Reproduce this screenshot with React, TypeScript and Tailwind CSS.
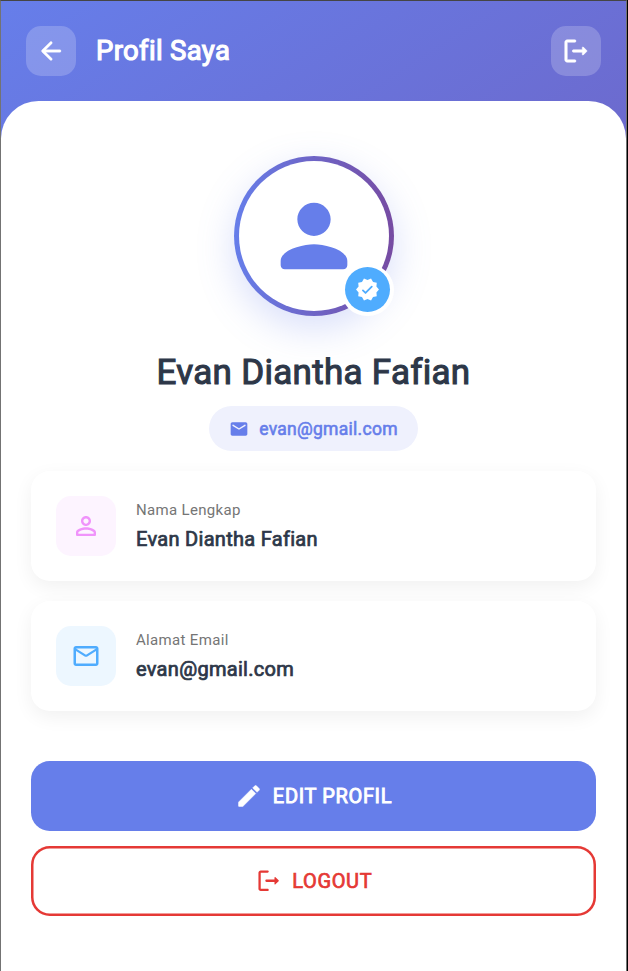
import type { ReactNode } from "react";

type IconProps = { className: string; children: ReactNode };

function Icon({ className, children }: IconProps) {
  return (
    <svg viewBox="0 0 24 24" fill="currentColor" className={"block shrink-0 " + className}>
      {children}
    </svg>
  );
}

function ArrowBackIcon({ className }: { className: string }) {
  return (
    <Icon className={className}>
      <path d="M19 11H7.83l4.88-4.88c.39-.39.39-1.03 0-1.42-.39-.39-1.02-.39-1.41 0l-6.59 6.59c-.39.39-.39 1.02 0 1.41l6.59 6.59c.39.39 1.02.39 1.41 0 .39-.39.39-1.02 0-1.41L7.83 13H19c.55 0 1-.45 1-1s-.45-1-1-1z" />
    </Icon>
  );
}

function LogoutIcon({ className }: { className: string }) {
  return (
    <Icon className={className}>
      <path d="M5 5h6c.55 0 1-.45 1-1s-.45-1-1-1H5c-1.1 0-2 .9-2 2v14c0 1.1.9 2 2 2h6c.55 0 1-.45 1-1s-.45-1-1-1H5V5z" />
      <path d="M20.65 11.65l-2.79-2.79c-.32-.32-.86-.1-.86.35V11h-7c-.55 0-1 .45-1 1s.45 1 1 1h7v1.79c0 .45.54.67.85.35l2.79-2.79c.2-.19.2-.51.01-.7z" />
    </Icon>
  );
}

function PersonIcon({ className }: { className: string }) {
  return (
    <Icon className={className}>
      <path d="M12 12c2.21 0 4-1.79 4-4s-1.79-4-4-4-4 1.79-4 4 1.79 4 4 4zm0 2c-2.67 0-8 1.34-8 4v1c0 .55.45 1 1 1h14c.55 0 1-.45 1-1v-1c0-2.66-5.33-4-8-4z" />
    </Icon>
  );
}

function VerifiedIcon({ className }: { className: string }) {
  return (
    <Icon className={className}>
      <path d="M23 12l-2.44-2.79.34-3.69-3.61-.82-1.89-3.2L12 2.96 8.6 1.5 6.71 4.69 3.1 5.5l.34 3.7L1 12l2.44 2.79-.34 3.7 3.61.82L8.6 22.5l3.4-1.47 3.4 1.46 1.89-3.19 3.61-.82-.34-3.69L23 12z" />
      <path d="M7.6 12.8l2.5 2.5 6-6.1" fill="none" stroke="#4facfe" strokeWidth="1.7" strokeLinecap="round" strokeLinejoin="round" />
    </Icon>
  );
}

function MailFilledIcon({ className }: { className: string }) {
  return (
    <Icon className={className}>
      <path d="M20 4H4c-1.1 0-1.99.9-1.99 2L2 18c0 1.1.9 2 2 2h16c1.1 0 2-.9 2-2V6c0-1.1-.9-2-2-2zm-.4 4.25l-7.07 4.42c-.32.2-.74.2-1.06 0L4.4 8.25c-.25-.16-.4-.43-.4-.72 0-.67.73-1.07 1.3-.72L12 11l6.7-4.19c.57-.35 1.3.05 1.3.72 0 .29-.15.56-.4.72z" />
    </Icon>
  );
}

function PersonOutlineIcon({ className }: { className: string }) {
  return (
    <Icon className={className}>
      <path d="M12 5.9c1.16 0 2.1.94 2.1 2.1s-.94 2.1-2.1 2.1S9.9 9.16 9.9 8s.94-2.1 2.1-2.1m0 9c2.97 0 6.1 1.46 6.1 2.1v1.1H5.9V17c0-.64 3.13-2.1 6.1-2.1M12 4C9.79 4 8 5.79 8 8s1.79 4 4 4 4-1.79 4-4-1.79-4-4-4zm0 9c-2.67 0-8 1.34-8 4v2c0 .55.45 1 1 1h14c.55 0 1-.45 1-1v-2c0-2.66-5.33-4-8-4z" />
    </Icon>
  );
}

function MailOutlineIcon({ className }: { className: string }) {
  return (
    <Icon className={className}>
      <path d="M20 4H4c-1.1 0-2 .9-2 2v12c0 1.1.9 2 2 2h16c1.1 0 2-.9 2-2V6c0-1.1-.9-2-2-2zm0 14H4V8l6.94 4.34c.65.41 1.47.41 2.12 0L20 8v10zm-8-7L4 6h16l-8 5z" />
    </Icon>
  );
}

function EditIcon({ className }: { className: string }) {
  return (
    <Icon className={className}>
      <path d="M3 17.46v3.04c0 .28.22.5.5.5h3.04c.13 0 .26-.05.35-.15L17.81 9.94l-3.75-3.75L3.15 17.1c-.1.1-.15.22-.15.36zM20.71 7.04c.39-.39.39-1.02 0-1.41l-2.34-2.34c-.39-.39-1.02-.39-1.41 0l-1.83 1.83 3.75 3.75 1.83-1.83z" />
    </Icon>
  );
}

function InfoCard({ icon, tint, label, value }: { icon: ReactNode; tint: string; label: string; value: string }) {
  return (
    <div className="flex h-[110px] items-center gap-5 rounded-[18.75px] bg-white px-[25px] shadow-[0_6px_19px_rgba(0,0,0,0.06)]">
      <div className={"flex size-[60px] items-center justify-center rounded-[15px] " + tint}>{icon}</div>
      <div className="flex flex-col gap-2 whitespace-nowrap">
        <span className="text-[15px] leading-[18px] tracking-[0.33px] text-[#757575]">{label}</span>
        <span className="text-[20px] leading-[25px] tracking-[0.3px] text-[#2d3748] [-webkit-text-stroke:0.74px_#2d3748]">{value}</span>
      </div>
    </div>
  );
}

export default function App() {
  return (
    <div className="h-[971px] w-[628px] overflow-hidden bg-black pr-px font-[Roboto,sans-serif]">
      <div className="h-full border-x border-t border-x-[#737373] border-t-[#454545]">
        <div className="flex h-full flex-col bg-[linear-gradient(147.2deg,#667eea,#764ba2)]">
          <header className="flex h-[100px] shrink-0 items-center px-[25px]">
            <button className="flex size-[50px] items-center justify-center rounded-[15px] bg-white/20 text-white">
              <ArrowBackIcon className="size-[30px] stroke-current stroke-[0.3]" />
            </button>
            <h1 className="ml-5 flex-1 text-[27.5px] leading-[32px] tracking-[0.32px] text-white [-webkit-text-stroke:1.15px_white]">Profil Saya</h1>
            <button className="flex size-[50px] items-center justify-center rounded-[15px] bg-white/20 text-white">
              <LogoutIcon className="size-[30px] stroke-current stroke-[0.4]" />
            </button>
          </header>

          <main className="flex flex-1 flex-col items-center rounded-t-[37.5px] bg-white px-[30px] pt-[55px]">
            <div className="relative size-[160px] shrink-0 rounded-full bg-[linear-gradient(90deg,#667eea,#764ba2)] p-[5px] shadow-[0_12.5px_37.5px_rgba(102,126,234,0.25)]">
              <div className="flex size-full items-center justify-center rounded-full bg-white text-[#667eea]">
                <PersonIcon className="size-[100px]" />
              </div>
              <div className="absolute right-0 bottom-0 flex size-[52.5px] items-center justify-center rounded-full bg-white">
                <div className="flex size-[45px] items-center justify-center rounded-full bg-[#4facfe] text-white">
                  <VerifiedIcon className="size-[25px]" />
                </div>
              </div>
            </div>

            <h2 className="mt-9 text-[35px] leading-[41px] tracking-[0.3px] whitespace-nowrap text-[#2d3748] [-webkit-text-stroke:1.1px_#2d3748]">
              Evan Diantha Fafian
            </h2>
            <div className="mt-[13px] flex h-[45px] shrink-0 items-center gap-2.5 rounded-full bg-[#eff1fd] px-5 text-[#667eea]">
              <MailFilledIcon className="size-5" />
              <span className="pt-0.5 text-[17.5px] leading-[21px] tracking-[0.27px] [-webkit-text-stroke:0.6px_#667eea]">evan@gmail.com</span>
            </div>

            <div className="mt-5 flex w-full flex-col gap-5">
              <InfoCard
                icon={<PersonOutlineIcon className="size-[30px] text-[#f093fb]" />}
                tint="bg-[#fdf4ff]"
                label="Nama Lengkap"
                value="Evan Diantha Fafian"
              />
              <InfoCard
                icon={<MailOutlineIcon className="size-[30px] text-[#4facfe]" />}
                tint="bg-[#edf7ff]"
                label="Alamat Email"
                value="evan@gmail.com"
              />
            </div>

            <div className="mt-[50px] flex w-full flex-col gap-[15px]">
              <button className="flex h-[70px] items-center justify-center gap-2.5 rounded-[18.75px] bg-[#667eea] text-white">
                <EditIcon className="size-[28px] stroke-current stroke-[0.4]" />
                <span className="text-[20px] leading-[24px] tracking-[0.65px] [-webkit-text-stroke:0.9px_white]">EDIT PROFIL</span>
              </button>
              <button className="flex h-[70px] items-center justify-center gap-2.5 rounded-[18.75px] bg-white text-[#e53935] shadow-[inset_0_0_0_2.5px_#e53935]">
                <LogoutIcon className="size-[27.5px]" />
                <span className="text-[20px] leading-[24px] tracking-[0.65px] [-webkit-text-stroke:0.74px_#e53935]">LOGOUT</span>
              </button>
            </div>
          </main>
        </div>
      </div>
    </div>
  );
}
